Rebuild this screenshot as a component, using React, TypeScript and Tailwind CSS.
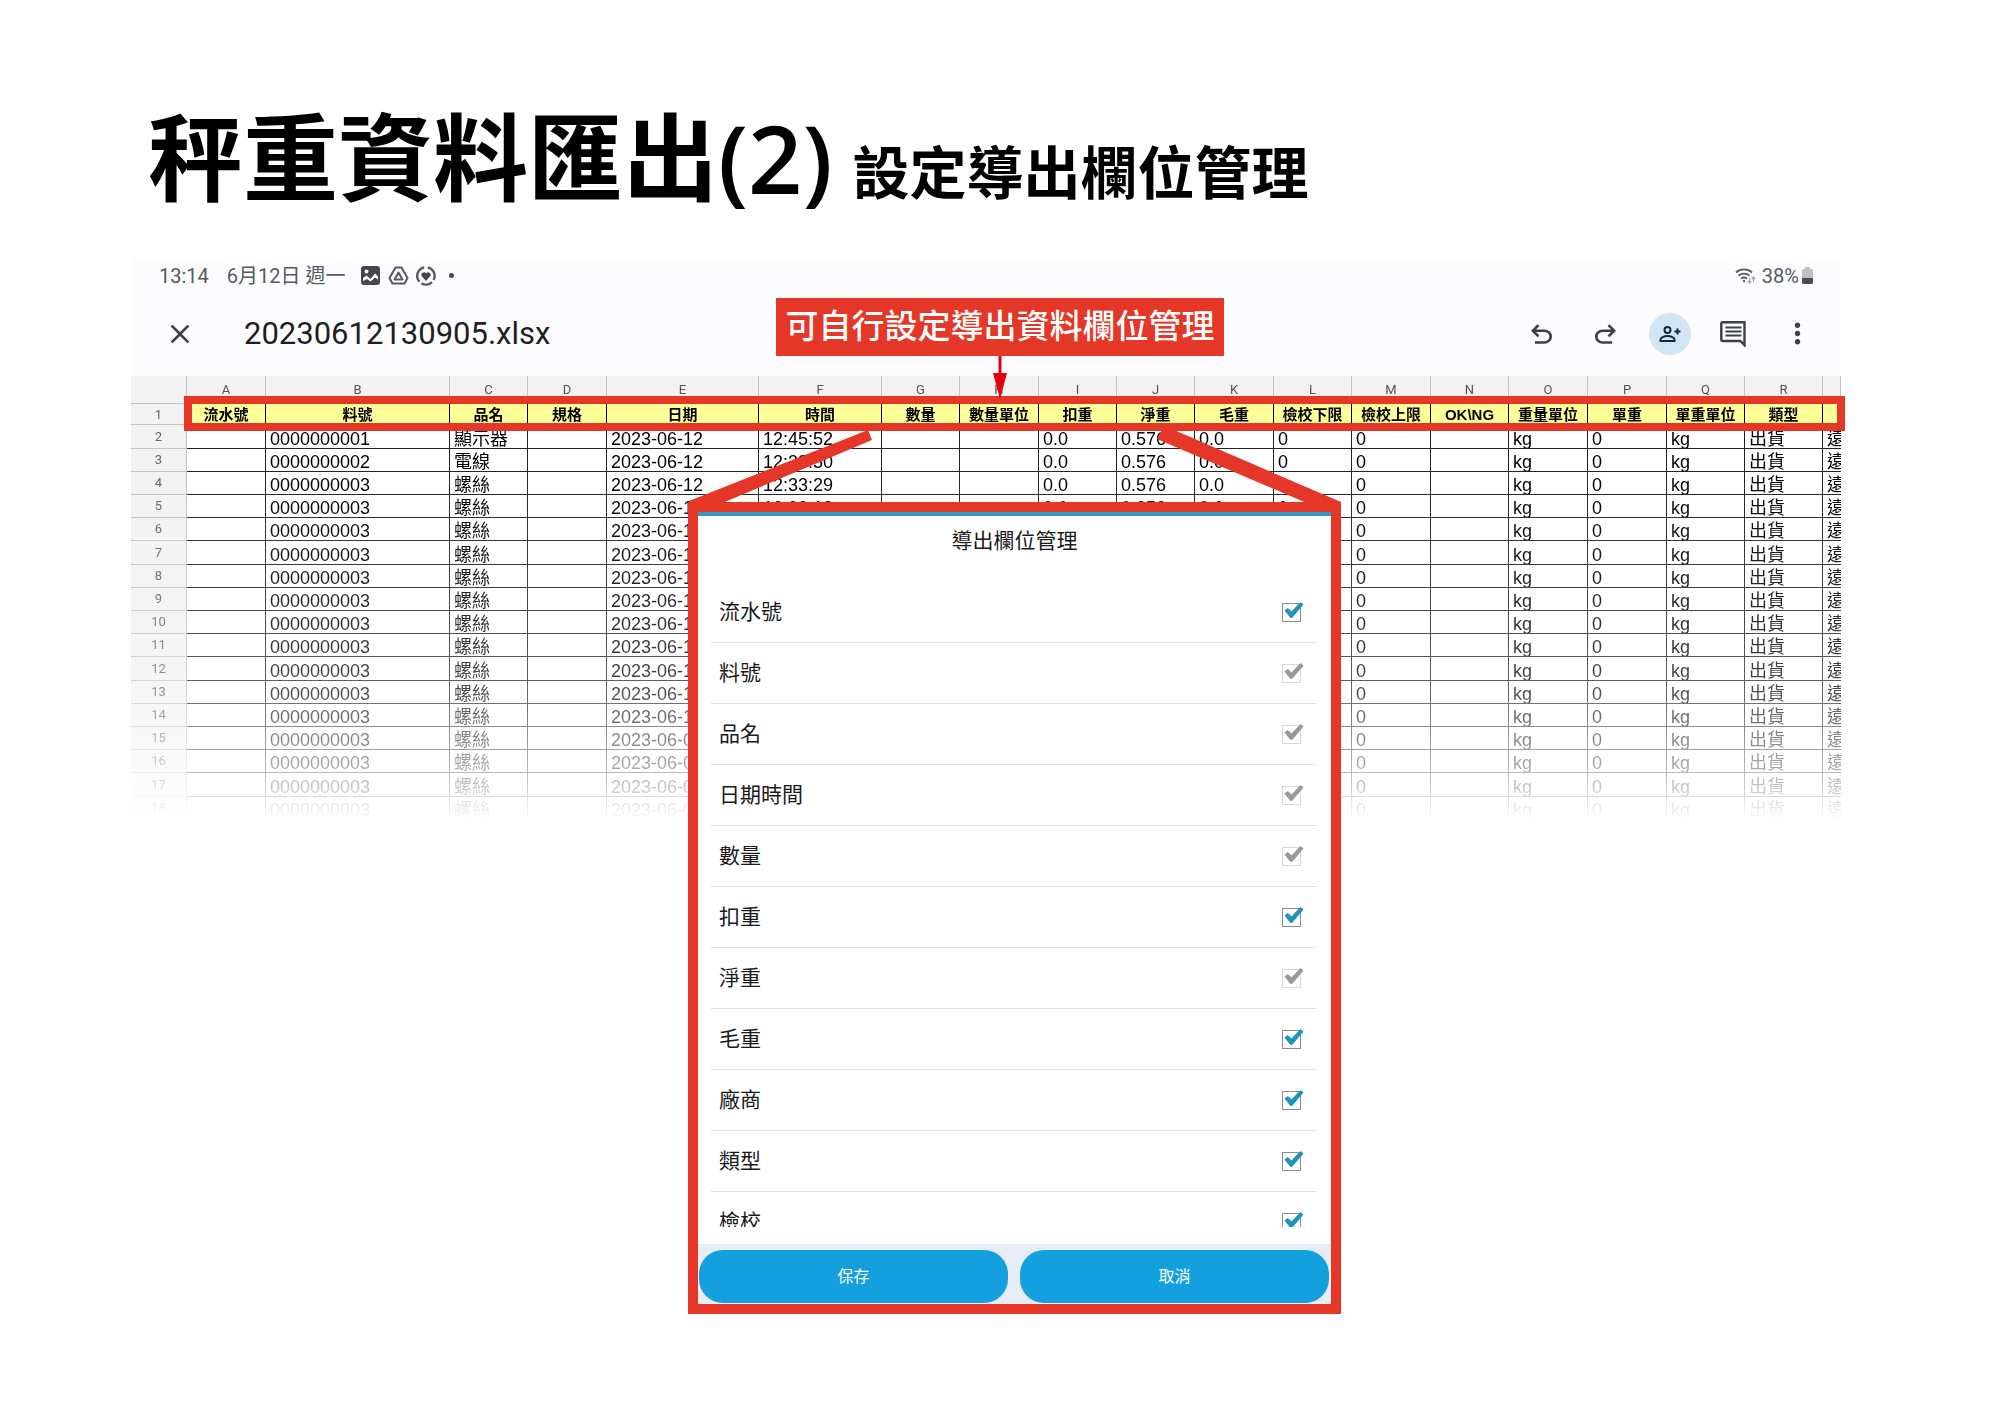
import React from 'react';
import { MdClose, MdMoreVert } from 'react-icons/md';

interface Column {
  letter: string;
  title: string;
  width: string;
}

interface Field {
  name: string;
  locked: boolean;
}

const columns: Column[] = [
  { letter: 'A', title: '流水號', width: 'w-[79px]' },
  { letter: 'B', title: '料號', width: 'w-[184px]' },
  { letter: 'C', title: '品名', width: 'w-[78px]' },
  { letter: 'D', title: '規格', width: 'w-[79px]' },
  { letter: 'E', title: '日期', width: 'w-[152px]' },
  { letter: 'F', title: '時間', width: 'w-[123px]' },
  { letter: 'G', title: '數量', width: 'w-[78px]' },
  { letter: 'H', title: '數量單位', width: 'w-[79px]' },
  { letter: 'I', title: '扣重', width: 'w-[78px]' },
  { letter: 'J', title: '淨重', width: 'w-[78px]' },
  { letter: 'K', title: '毛重', width: 'w-[79px]' },
  { letter: 'L', title: '檢校下限', width: 'w-[78px]' },
  { letter: 'M', title: '檢校上限', width: 'w-[79px]' },
  { letter: 'N', title: 'OK\\NG', width: 'w-[78px]' },
  { letter: 'O', title: '重量單位', width: 'w-[79px]' },
  { letter: 'P', title: '單重', width: 'w-[79px]' },
  { letter: 'Q', title: '單重單位', width: 'w-[78px]' },
  { letter: 'R', title: '類型', width: 'w-[78px]' },
  { letter: '', title: '', width: 'w-[18px]' },
];

const weighedRow = (code: string, item: string, time: string, net: string) => [
  '', code, item, '', '2023-06-12', time, '', '', '0.0', net, '0.0', '0', '0', '', 'kg', '0', 'kg', '出貨', '遠',
];

const shortRow = (date: string) => [
  '', '0000000003', '螺絲', '', date, '', '', '', '', '', '', '', '0', '', 'kg', '0', 'kg', '出貨', '遠',
];

const rows: string[][] = [
  weighedRow('0000000001', '顯示器', '12:45:52', '0.576'),
  weighedRow('0000000002', '電線', '12:38:50', '0.576'),
  weighedRow('0000000003', '螺絲', '12:33:29', '0.576'),
  weighedRow('0000000003', '螺絲', '12:33:18', '0.352'),
  ...Array.from({ length: 9 }, () => shortRow('2023-06-12')),
  ...Array.from({ length: 4 }, () => shortRow('2023-06-09')),
];

const fields: Field[] = [
  { name: '流水號', locked: false },
  { name: '料號', locked: true },
  { name: '品名', locked: true },
  { name: '日期時間', locked: true },
  { name: '數量', locked: true },
  { name: '扣重', locked: false },
  { name: '淨重', locked: true },
  { name: '毛重', locked: false },
  { name: '廠商', locked: false },
  { name: '類型', locked: false },
  { name: '檢校', locked: false },
];

const UndoIcon: React.FC<{ flip?: boolean }> = ({ flip }) => (
  <svg viewBox="160 -800 640 600" className={flip ? 'w-[21px] h-[20px] -scale-x-100' : 'w-[21px] h-[20px]'} fill="currentColor">
    <path d="M280-200v-80h284q63 0 109.500-40T720-420q0-60-46.500-100T564-560H312l104 104-56 56-200-200 200-200 56 56-104 104h252q97 0 169.500 63T800-420q0 94-72.500 157T564-200H280Z" />
  </svg>
);

const StatusBar: React.FC = () => (
  <div className="flex items-center justify-between pl-[28px] pr-[28px] h-[35px] bg-[#fcfcff] text-[20px] leading-[24px] text-[#555a60]">
    <div className="flex items-center">
      <span>13:14</span>
      <span className="ml-[18px]">6月12日 週一</span>
      <svg viewBox="0 0 19 19" className="w-[19px] h-[19px] ml-[15px]">
        <rect width="19" height="19" rx="3" fill="#44484c" />
        <circle cx="5.500" cy="5.500" r="1.900" fill="#fcfcff" />
        <path d="M2 15V12L5.500 9.500l4 3.500L14 7.500l3 3v3L14 11.500l-4.500 4L6 13Z" fill="#fcfcff" />
      </svg>
      <svg viewBox="0 0 21 19" className="w-[21px] h-[19px] ml-2" fill="none" stroke="#565a5e" strokeLinejoin="round">
        <path d="M7.500 1.500h6l6 10.500-3 5.500h-12l-3-5.500Z" strokeWidth="2" />
        <path d="M10.500 6.500l4 7h-8Z" strokeWidth="2" />
      </svg>
      <svg viewBox="0 0 20 20" className="w-[20px] h-[20px] ml-[7px]">
        <path d="M8.200 1.400A8.700 8.700 0 0 0 3.500 15.800M5.300 17.300A8.700 8.700 0 0 0 16 16.200" fill="none" stroke="#565a5e" strokeWidth="2.400" />
        <path d="M11.800 1.400A8.700 8.700 0 0 1 17.600 14" fill="none" stroke="#565a5e" strokeWidth="2.400" />
        <path d="M10 15L5.800 10.300a2.400 2.400 0 0 1 4.200-2.700 2.400 2.400 0 0 1 4.200 2.700Z" fill="#44484c" />
      </svg>
      <span className="size-[5px] rounded-full bg-[#44484c] ml-[13px]" />
    </div>
    <div className="flex items-center">
      <svg viewBox="0 0 21 17" className="w-[21px] h-[17px] mr-[6px]" fill="none" stroke="#565a5e" strokeWidth="1.800">
        <path d="M1 5.500a12 12 0 0 1 16 0M3.500 8.600a8.500 8.500 0 0 1 11 0M6 11.600a5 5 0 0 1 6 0" />
        <circle cx="9" cy="14" r="1.200" fill="#565a5e" stroke="none" />
        <path d="M14.500 11v5m-1.800-2l1.800 2 1.800-2M18.500 15v-5m-1.800 2l1.800-2 1.800 2" stroke="#a3a6aa" strokeWidth="1.200" />
      </svg>
      <span>38%</span>
      <svg viewBox="0 0 11 17" className="w-[11px] h-[17px] ml-[3px]">
        <path d="M3 0h5v2h1.500A1.500 1.500 0 0 1 11 3.500V11H0V3.500A1.500 1.500 0 0 1 1.500 2H3Z" fill="#bfc0c4" />
        <path d="M0 11h11v4.500a1.500 1.500 0 0 1-1.500 1.500h-8A1.500 1.500 0 0 1 0 15.500Z" fill="#4a4c50" />
      </svg>
    </div>
  </div>
);

const Toolbar: React.FC = () => (
  <div className="flex items-center justify-between h-[83px] pb-[2px] pl-[33px] pr-[27px] bg-[#fcfcff] text-[#3c4043]">
    <div className="flex items-center">
      <button type="button" aria-label="關閉">
        <MdClose className="size-[32px]" />
      </button>
      <span className="ml-[48px] text-[31px] leading-[36px] text-[#1f1f1f]">20230612130905.xlsx</span>
    </div>
    <div className="flex items-center">
      <button type="button" aria-label="復原">
        <UndoIcon />
      </button>
      <button type="button" aria-label="重做" className="ml-[43px]">
        <UndoIcon flip />
      </button>
      <button type="button" aria-label="共用" className="flex items-center justify-center size-[42px] ml-[33px] rounded-full bg-[#d2e5f4]">
        <svg viewBox="0 0 22 18" className="w-[22px] h-[18px]" fill="none" stroke="#13293c" strokeWidth="2">
          <circle cx="8.500" cy="5" r="3" />
          <path d="M1.500 16v-1.500c0-2 3.500-3.400 7-3.400s7 1.400 7 3.400V16Z" />
          <path d="M18.500 3.500v6M15.500 6.500h6" />
        </svg>
      </button>
      <button type="button" aria-label="註解" className="ml-[29px]">
        <svg viewBox="0 0 27 26" className="w-[27px] h-[26px]">
          <path d="M2.500 1.200h22v23L20.300 20H2.500a1.200 1.200 0 0 1-1.200-1.200V2.400a1.200 1.200 0 0 1 1.200-1.200Z" fill="none" stroke="currentColor" strokeWidth="2.400" />
          <path d="M5.500 6.500h16M5.500 10.500h16M5.500 14.500h16" stroke="currentColor" strokeWidth="2" />
        </svg>
      </button>
      <button type="button" aria-label="更多" className="ml-[34px]">
        <MdMoreVert className="size-[33px]" />
      </button>
    </div>
  </div>
);

const SheetTable: React.FC = () => (
  <table className="w-full table-fixed border-separate border-spacing-0 bg-white [mask-image:linear-gradient(to_bottom,black_20%,rgba(0,0,0,0.85)_50%,rgba(0,0,0,0.72)_70%,rgba(0,0,0,0.5)_80%,rgba(0,0,0,0.27)_91%,transparent_100%)]">
    <thead>
      <tr className="h-[28px] bg-[#f2f2f2] text-[13px] leading-[16px] text-[#555555]">
        <th className="w-[56px] p-0 border-r border-b border-[#c4c4c4]" />
        {columns.map((column, i) => (
          <th key={i} className={`${column.width} p-0 font-normal border-r border-b border-[#c4c4c4]`}>
            {column.letter}
          </th>
        ))}
      </tr>
      <tr className="h-[21px] bg-[#ffff99] font-['Liberation_Sans','Noto_Sans_CJK_TC',sans-serif] text-[15px] leading-[18px] text-black">
        <th className="p-0 pt-[2px] bg-[#f2f2f2] border-r border-b border-[#c4c4c4] font-['Roboto',sans-serif] font-normal text-[13px] text-[#666666]">1</th>
        {columns.map((column, i) => (
          <th key={i} className="p-0 pt-[2px] font-bold border-r border-b border-black whitespace-nowrap">
            {column.title}
          </th>
        ))}
      </tr>
    </thead>
    <tbody className="font-['Liberation_Sans','Noto_Sans_CJK_TC',sans-serif] text-[18px] leading-[18px] text-black">
      {rows.map((row, r) => (
        <tr key={r} className={r % 5 === 0 ? 'h-[24px]' : 'h-[23px]'}>
          <th className="p-0 bg-[#f2f2f2] border-r border-b border-[#c4c4c4] font-['Roboto',sans-serif] font-normal text-[13px] text-[#666666]">
            {r + 2}
          </th>
          {row.map((cell, c) => (
            <td key={c} className="p-0 pl-[4px] align-bottom overflow-hidden whitespace-nowrap border-r border-b border-[#222222] last:border-r-0">
              {cell}
            </td>
          ))}
        </tr>
      ))}
    </tbody>
  </table>
);

const FieldRow: React.FC<{ field: Field }> = ({ field }) => (
  <label className="flex items-center justify-between h-[61px] ml-[13px] mr-[14px] pl-[8px] pr-[16px] border-b border-[#e2e2e2] text-[21px] leading-[28px]">
    {field.name}
    <span className="relative flex">
      <input
        type="checkbox"
        defaultChecked
        disabled={field.locked}
        className="peer appearance-none size-[19px] border border-[#8d8d8d] disabled:border-[#d8d8d8]"
      />
      <svg viewBox="0 0 22 20" className="absolute -top-[2px] left-[1px] w-[22px] h-[20px] hidden peer-checked:block pointer-events-none">
        <path
          d="M2 9.500L5 7.500l3.500 3.500L17.500 1.500l2.500 2L9 16.500H7.500Z"
          fill={field.locked ? '#999999' : '#1f93bd'}
          stroke={field.locked ? '#999999' : '#1f93bd'}
          strokeLinejoin="round"
        />
      </svg>
    </span>
  </label>
);

const FieldDialog: React.FC = () => (
  <section className="absolute left-[557px] top-[244px] w-[653px] border-10 border-[#e43728] bg-white text-[#1a1a1a]">
    <div className="h-[4px] bg-[#2f97c9]" />
    <h3 className="h-[50px] mb-[16px] text-center text-[21px] leading-[50px]">導出欄位管理</h3>
    <div className="h-[645px] mb-[17px] overflow-hidden">
      {fields.map((field) => (
        <FieldRow key={field.name} field={field} />
      ))}
    </div>
    <div className="flex gap-3 pl-px pr-[2px] pt-[6px] pb-px bg-[#e6edf5]">
      <button type="button" className="flex-1 h-[53px] rounded-[24px] bg-[#14a0de] text-white text-[16px]">保存</button>
      <button type="button" className="flex-1 h-[53px] rounded-[24px] bg-[#14a0de] text-white text-[16px]">取消</button>
    </div>
  </section>
);

const App: React.FC = () => {
  return (
    <main className="min-h-screen bg-white pb-[584px] font-['Roboto','Noto_Sans_CJK_TC',sans-serif]">
      <header className="flex items-baseline h-[258px] pl-[148px] pt-[87px] font-['Open_Sans','Noto_Sans_CJK_TC',sans-serif] font-semibold text-black whitespace-nowrap">
        <h1 className="text-[95px] leading-[140px]">秤重資料匯出(2)</h1>
        <h2 className="ml-5 text-[57px] leading-[84px]">設定導出欄位管理</h2>
      </header>

      <div className="relative ml-[131px] mr-[159px]">
        <StatusBar />
        <Toolbar />
        <SheetTable />

        {/* highlighted header row */}
        <div className="absolute left-[53px] -right-[4px] top-[138px] h-[35px] border-8 border-[#e43728]" />

        <p className="absolute left-[645px] top-[40px] w-[448px] h-[58px] bg-[#e43728] text-white text-center font-medium text-[33px] leading-[58px] whitespace-nowrap">
          可自行設定導出資料欄位管理
        </p>

        {/* arrow and connector lines */}
        <svg className="absolute left-0 top-0 w-[1710px] h-[260px] pointer-events-none" viewBox="0 0 1710 260">
          <path d="M867.500 98h3v17h5.500l-7 26-7-26h5.500Z" fill="#e60012" />
          <path d="M737 172l4 10-152 64h-31v-3Z" fill="#e43728" />
          <path d="M1026 181l5-9h12l167 72v2h-32Z" fill="#e43728" />
        </svg>

        <FieldDialog />
      </div>
    </main>
  );
};

export default App;
